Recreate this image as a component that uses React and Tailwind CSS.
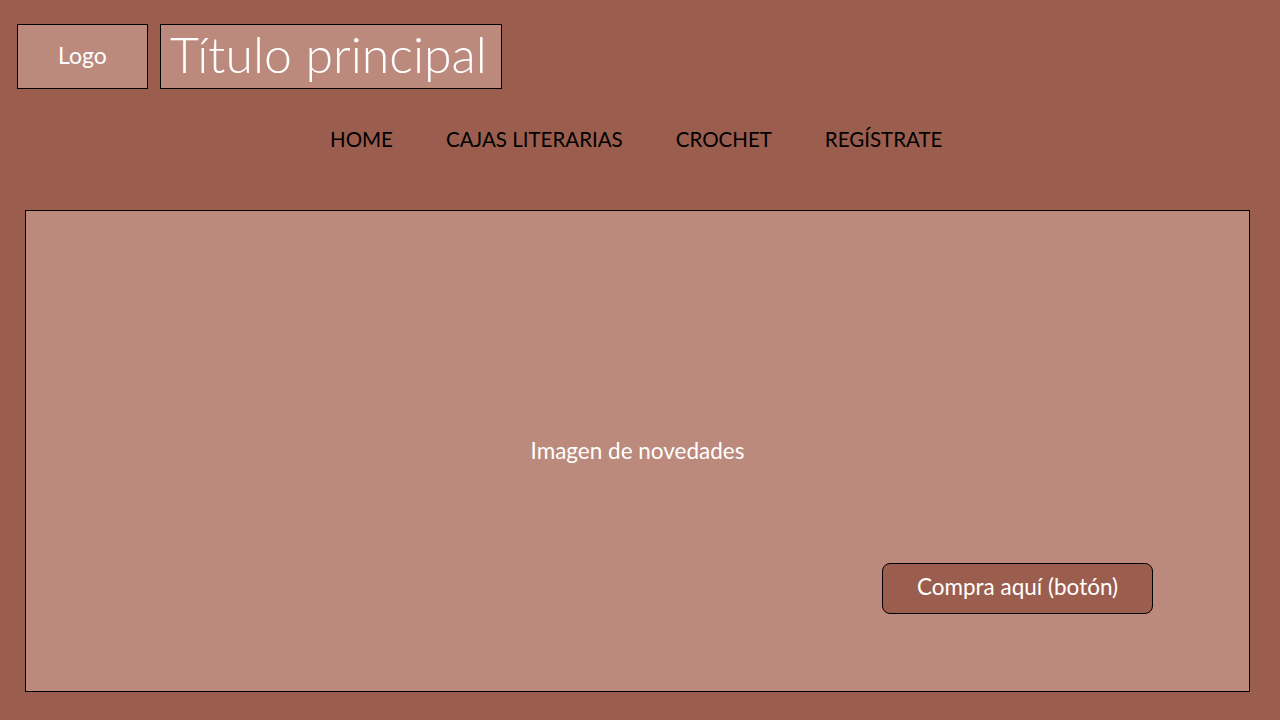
export default function App() {
  const font = { fontFamily: "Lato, 'Noto Sans', sans-serif" };
  return (
    <div className="w-[1280px] h-[720px] bg-[#9b5d4e] overflow-hidden" style={font}>
      <div className="flex items-start pt-[24px] pl-[17px] gap-[12px]">
        <div className="w-[131px] h-[65px] border border-black bg-[#bb8a7c] flex items-center justify-center pb-[2px] text-white text-[23px]">
          Logo
        </div>
        <div className="w-[342px] h-[65px] border border-black bg-[#bb8a7c] flex items-center pl-[9px] pb-[6px] text-white text-[50px] font-light leading-none">
          Título principal
        </div>
      </div>
      <nav className="flex items-center pl-[330px] gap-[53px] mt-[35px] h-[30px] text-black text-[20.5px] leading-none">
        <span>HOME</span>
        <span>CAJAS LITERARIAS</span>
        <span>CROCHET</span>
        <span>REGÍSTRATE</span>
      </nav>
      <div className="ml-[25px] w-[1225px] mt-[56px] h-[482px] border border-black bg-[#bb8a7c] grid">
        <div className="[grid-area:1/1] flex items-center justify-center text-white text-[22.5px]">
          Imagen de novedades
        </div>
        <div className="[grid-area:1/1] self-end justify-self-end mr-[96px] mb-[77px] w-[271px] h-[51px] rounded-[8px] border border-black bg-[#9b5d4e] flex items-center justify-center pb-[3px] text-white text-[22.5px]">
          Compra aquí (botón)
        </div>
      </div>
    </div>
  );
}
